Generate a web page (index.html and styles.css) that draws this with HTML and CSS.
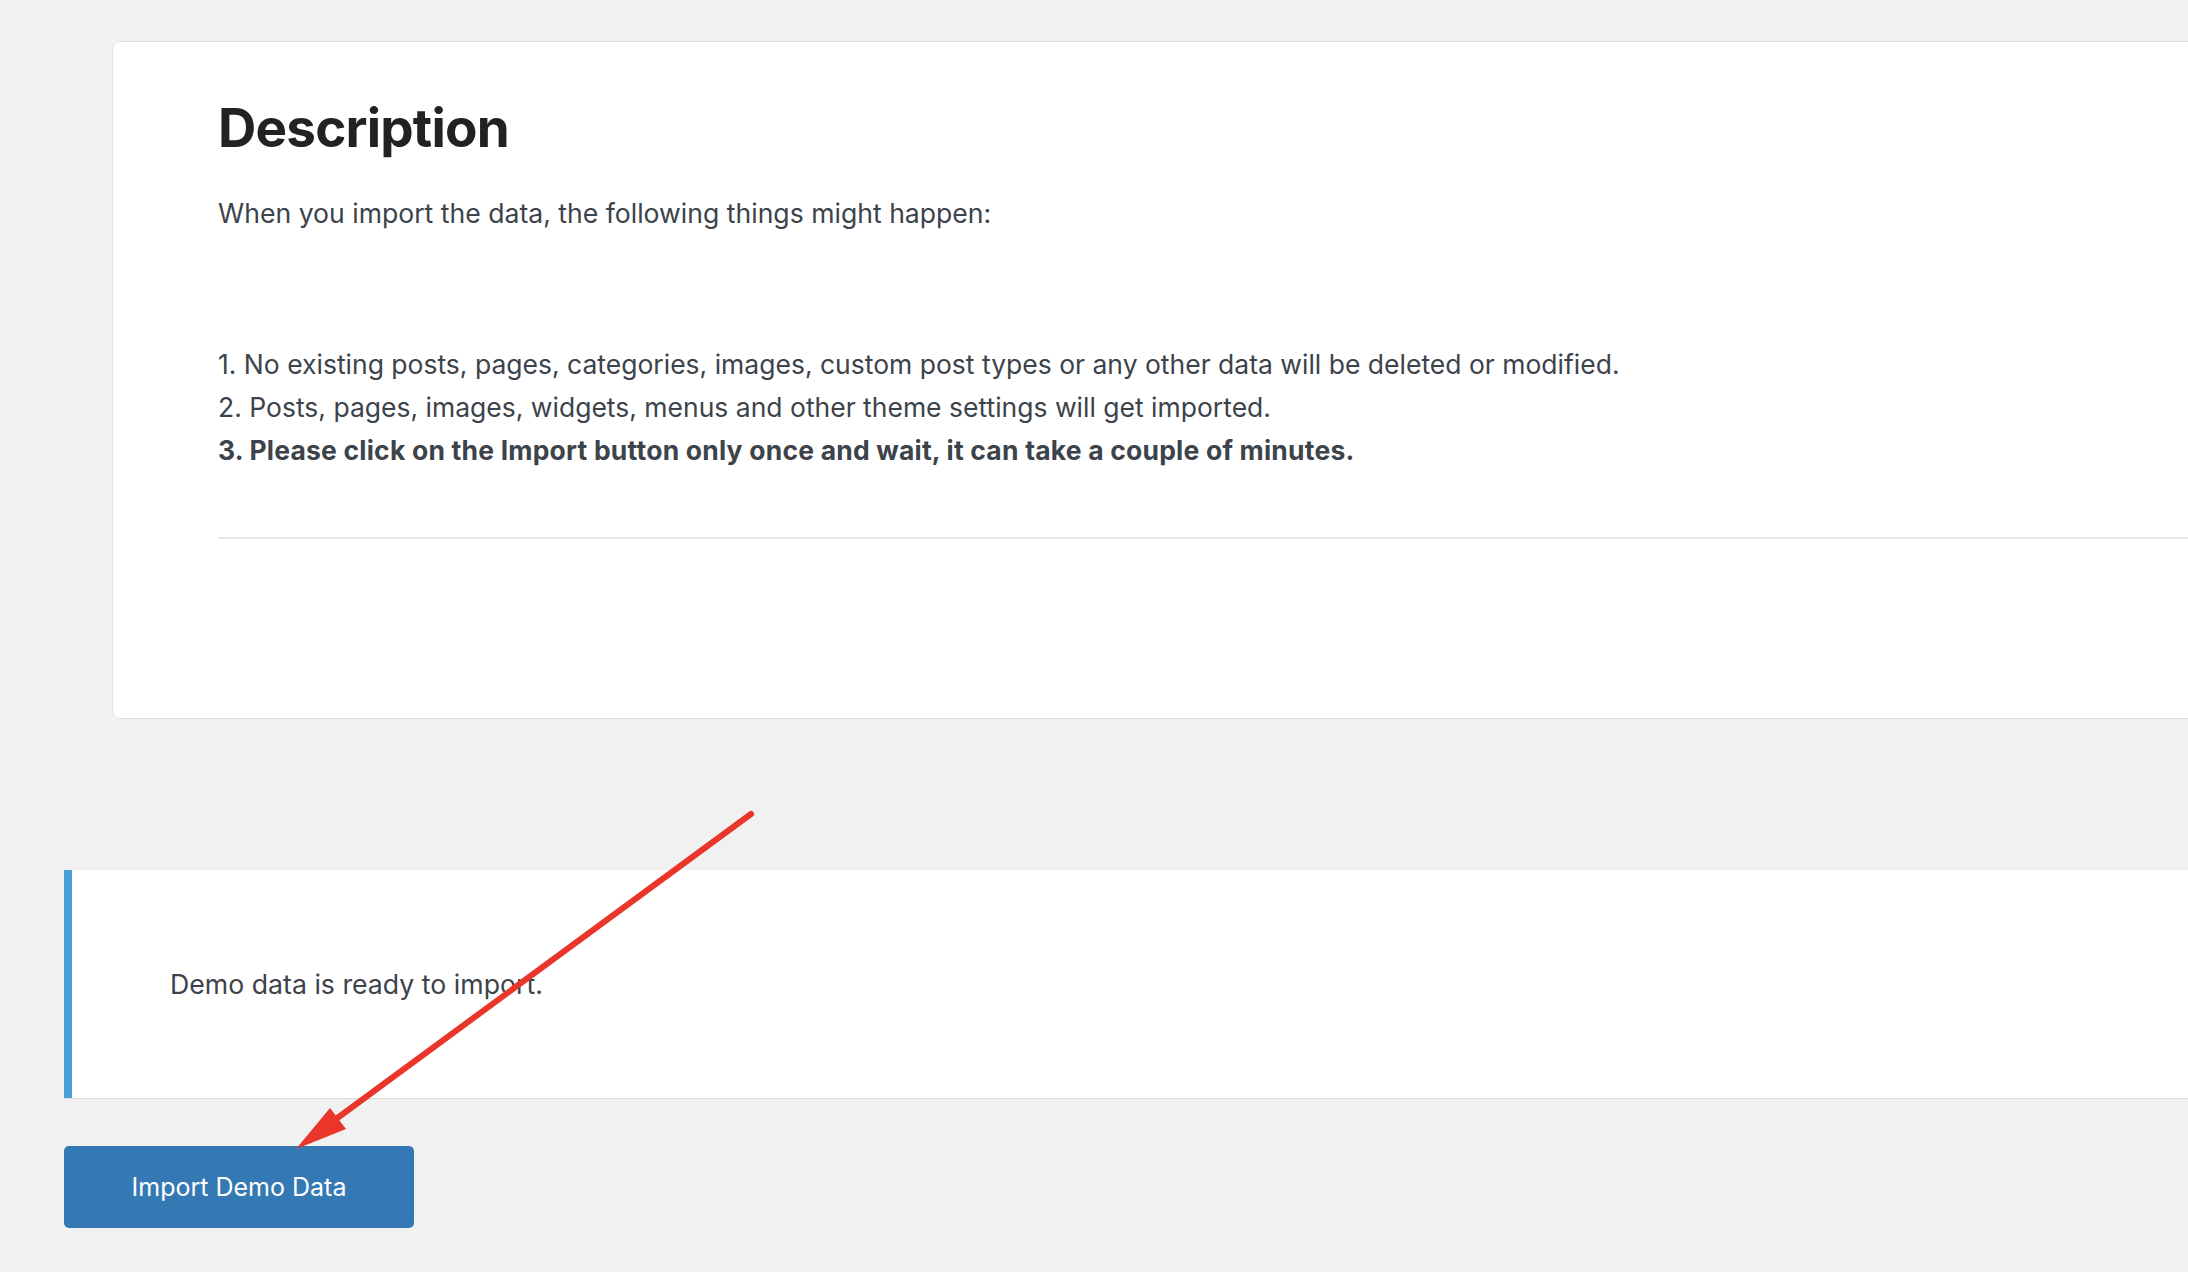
FILE: index.html
```html
<!DOCTYPE html>
<html lang="en">
<head>
<meta charset="utf-8">
<title>Import Demo Data</title>
<link rel="stylesheet" href="styles.css">
</head>
<body>
<div class="page">
  <section class="card">
    <h1 class="card-title">Description</h1>
    <p class="card-intro">When you import the data, the following things might happen:</p>
    <ol class="steps">
      <li>1. No existing posts, pages, categories, images, custom post types or any other data will be deleted or modified.</li>
      <li>2. Posts, pages, images, widgets, menus and other theme settings will get imported.</li>
      <li class="steps-strong">3. Please click on the Import button only once and wait, it can take a couple of minutes.</li>
    </ol>
    <hr class="divider">
  </section>

  <div class="notice">
    <p class="notice-text">Demo data is ready to import.</p>
  </div>

  <button class="import-btn" type="button">Import Demo Data</button>
</div>

<svg class="annotation" width="2188" height="1272" viewBox="0 0 2188 1272" aria-hidden="true">
  <line x1="751" y1="814" x2="336" y2="1119" stroke="#e9352a" stroke-width="6" stroke-linecap="round"/>
  <polygon points="296,1149 330,1108 346,1129" fill="#e9352a"/>
</svg>
</body>
</html>
```

FILE: styles.css
```css
html, body {
  margin: 0;
  padding: 0;
}

body {
  background: #f1f1f1;
  font-family: Inter, "Noto Sans", "Liberation Sans", sans-serif;
  color: #3c434a;
  overflow: hidden;
  position: relative;
  min-height: 1272px;
}

.page {
  width: 2600px;
  padding-left: 64px;
  padding-top: 41px;
  box-sizing: border-box;
}

.card {
  margin-left: 48px;
  background: #fff;
  border: 1px solid #e2e2e2;
  border-radius: 8px;
  padding: 54px 0 179px 105px;
}

.card-title {
  margin: 0;
  font-size: 53px;
  line-height: 65px;
  font-weight: 700;
  letter-spacing: -0.8px;
  color: #222;
}

.card-intro {
  margin: 31px 0 0;
  font-size: 26.6px;
  line-height: 43px;
}

.steps {
  list-style: none;
  margin: 108px 0 0;
  padding: 0;
  font-size: 26.5px;
  line-height: 43px;
}

.steps-strong {
  font-weight: 700;
  letter-spacing: 0.2px;
}

.divider {
  margin: 65px 0 0;
  border: 0;
  height: 2px;
  background: #e8e8e8;
}

.notice {
  margin-top: 151px;
  height: 228px;
  box-sizing: border-box;
  background: #fff;
  border-left: 8px solid #46a0d3;
  box-shadow: 0 1px 1px rgba(0, 0, 0, 0.08);
  display: flex;
  align-items: center;
  padding-left: 98px;
}

.notice-text {
  margin: 0;
  font-size: 26.7px;
  line-height: 43px;
}

.import-btn {
  display: block;
  margin-top: 48px;
  width: 350px;
  height: 82px;
  border: 0;
  border-radius: 5px;
  background: #3579b4;
  color: #fff;
  font-family: Inter, "Noto Sans", "Liberation Sans", sans-serif;
  font-size: 25px;
  line-height: 82px;
  padding: 0 0 2px;
}

.annotation {
  position: absolute;
  left: 0;
  top: 0;
  pointer-events: none;
}
```
